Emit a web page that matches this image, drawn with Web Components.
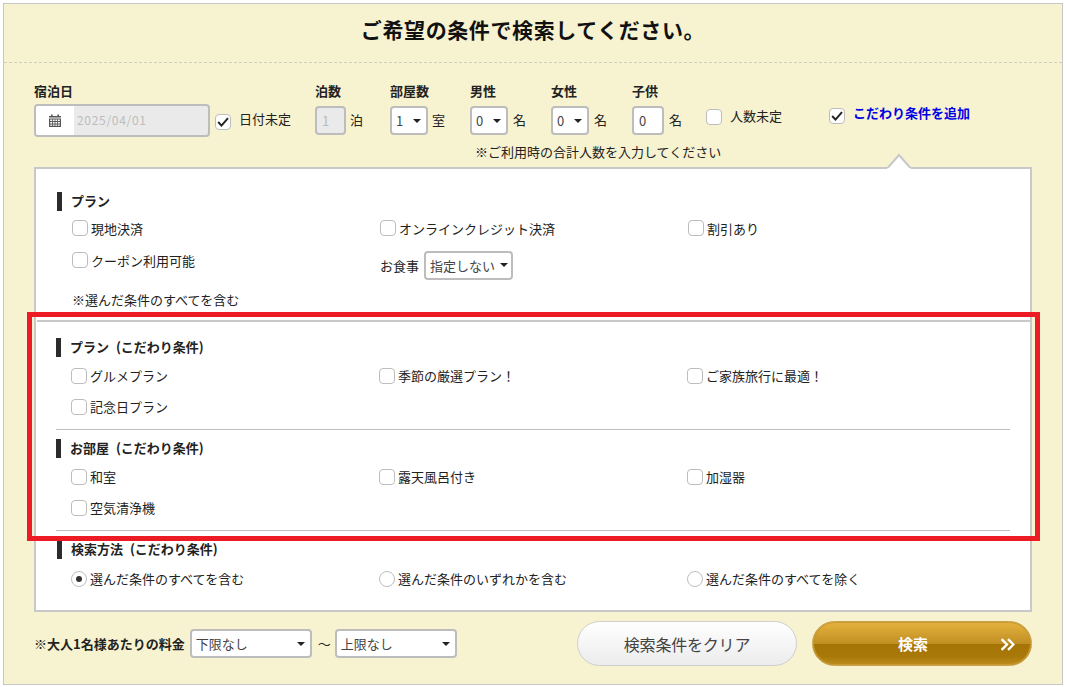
<!DOCTYPE html>
<html lang="ja">
<head>
<meta charset="utf-8">
<title>search</title>
<style>
html, body { margin: 0; padding: 0; background: #fff; }
body { font-family: "Noto Sans CJK JP", "Liberation Sans", sans-serif; font-size: 13px; color: #222; }
</style>
</head>
<body>
<search-form></search-form>
<script>
const FONT = `"Noto Sans CJK JP", "Liberation Sans", sans-serif`;

class AppCheck extends HTMLElement {
    connectedCallback() {
        const radio = this.hasAttribute("radio");
        const on = this.hasAttribute("checked");
        const mark = !on ? "" : radio
            ? `<span class="dot"></span>`
            : `<svg viewBox="0 0 16 16" width="16" height="16"><path d="M3.2 8 6.5 11.6 13 4.2" fill="none" stroke="#222" stroke-width="2"/></svg>`;
        this.attachShadow({ mode: "open" }).innerHTML = `
            <style>
                :host { display: inline-flex; align-items: center; gap: var(--check-gap, 3px); height: 18px; white-space: nowrap; }
                .box {
                    box-sizing: border-box; width: 16px; height: 16px; flex: none;
                    position: relative;
                    display: flex; align-items: center; justify-content: center;
                    background: #fff; border: 1px solid #bdbdbd; border-radius: ${radio ? "50%" : "4px"};
                }
                svg { position: absolute; left: -1px; top: -1px; }
                .dot { width: 6px; height: 6px; border-radius: 50%; background: #333; }
                .txt { position: relative; top: var(--text-shift, 0); }
            </style>
            <span class="box">${mark}</span><span class="txt"><slot></slot></span>`;
    }
}

class AppSelect extends HTMLElement {
    connectedCallback() {
        const w = this.getAttribute("width") || "38";
        const h = this.getAttribute("height") || "29";
        this.attachShadow({ mode: "open" }).innerHTML = `
            <style>
                :host {
                    display: inline-flex; align-items: center; justify-content: space-between;
                    box-sizing: border-box; width: ${w}px; height: ${h}px; padding: 0 var(--pad, 5px) 0 4px;
                    background: #fff; border: 2px solid #bdbdbd; border-radius: 4px; color: #444; white-space: nowrap;
                }
                i { width: 0; height: 0; border: 4px solid transparent; border-top: 4px solid #222; border-bottom: 0; flex: none; }
            </style>
            <span><slot></slot></span><i></i>`;
    }
}

class FieldGroup extends HTMLElement {
    connectedCallback() {
        const label = this.getAttribute("label");
        const unit = this.getAttribute("unit");
        this.attachShadow({ mode: "open" }).innerHTML = `
            <style>
                :host { display: block; margin-left: var(--left, 0); }
                b { display: block; height: 18px; line-height: 18px; font-size: 13px; margin-bottom: 5px; }
                .row { display: flex; align-items: center; height: 31px; gap: var(--unit-gap, 4px); }
                .row span { position: relative; top: -1px; }
            </style>
            <b>${label}</b>
            <div class="row"><slot></slot>${unit ? `<span>${unit}</span>` : ""}</div>`;
    }
}

class TextBox extends HTMLElement {
    connectedCallback() {
        const off = this.hasAttribute("disabled");
        this.attachShadow({ mode: "open" }).innerHTML = `
            <style>
                :host {
                    display: flex; align-items: center; box-sizing: border-box; width: ${this.getAttribute("width")}px; height: 29px;
                    padding-left: 5px; border: 2px solid #bdbdbd; border-radius: 4px;
                    background: ${off ? "#eaeaea" : "#fff"}; color: ${off ? "#bbb" : "#444"};
                }
            </style><slot></slot>`;
    }
}

class DateBox extends HTMLElement {
    connectedCallback() {
        this.attachShadow({ mode: "open" }).innerHTML = `
            <style>
                :host {
                    display: flex; box-sizing: border-box; width: 176px; height: 33px; overflow: hidden;
                    border: 2px solid #bdbdbd; border-radius: 4px; background: #eaeaea; color: #bdbdbd; font-size: 12px;
                }
                .ico { width: 38px; background: #fff; display: flex; align-items: center; justify-content: center; }
                .val { padding-left: 3px; line-height: 27px; letter-spacing: .7px; }
            </style>
            <span class="ico"><svg viewBox="0 0 12 13" width="12" height="13"><path fill="#555" d="M0 3.4V2h2V.5h1.6V2h4.8V.5H10V2h2v1.4zM0 4.4h12V13H0zM1.2 5.6v1.5h2V5.6zm2.8 0v1.5h1.6V5.6zm2.4 0v1.5H8V5.6zm2.4 0v1.5h2V5.6zM1.2 8v1.5h2V8zm2.8 0v1.5h1.6V8zm2.4 0v1.5H8V8zm2.4 0v1.5h2V8zM1.2 10.4v1.4h2v-1.4zm2.8 0v1.4h1.6v-1.4zm2.4 0v1.4H8v-1.4zm2.4 0v1.4h2v-1.4z"/></svg></span>
            <span class="val"><slot></slot></span>`;
    }
}

class CondSection extends HTMLElement {
    connectedCallback() {
        this.attachShadow({ mode: "open" }).innerHTML = `
            <style>
                :host { display: block; }
                h3 {
                    margin: 0 0 0 var(--bar-left, 21px); padding-left: 9px; height: 19px; line-height: 18px;
                    border-left: 5px solid #2b2b2b; font-size: 13px; font-weight: bold; word-spacing: 4px;
                }
                .grid {
                    display: grid; grid-template-columns: repeat(3, 308px); grid-auto-rows: var(--row, 31px);
                    align-items: center; padding-left: var(--grid-left, 36px); margin-top: var(--grid-top, 1px);
                    padding-bottom: var(--grid-bottom, 0);
                }
            </style>
            <h3>${this.getAttribute("heading")}</h3>
            <div class="grid"><slot></slot></div>`;
    }
}

class ActionButton extends HTMLElement {
    connectedCallback() {
        const primary = this.hasAttribute("primary");
        this.attachShadow({ mode: "open" }).innerHTML = `
            <style>
                :host {
                    display: flex; align-items: center; justify-content: center; position: relative;
                    box-sizing: border-box; width: 220px; height: 45px; border-radius: 23px; font-size: ${primary ? 15 : 16}px;
                    ${primary
                        ? `font-weight: bold; color: #fff; padding-right: 18px; border: 1px solid #c9a24a; box-shadow: inset 0 0 0 1px #c89a35;
                           background: linear-gradient(#e6b33f 0, #c08f22 50%, #a67405 51%, #a87808 80%, #bd8d20 100%);`
                        : `color: #444; letter-spacing: -.2px; border: 1px solid #cfcfcf;
                           background: linear-gradient(#fff, #ececec);`}
                }
                svg { position: absolute; right: 16px; top: 15px; }
            </style>
            <slot></slot>
            ${primary ? `<svg viewBox="0 0 14 14" width="15" height="15"><path d="M1.5 2 6.5 7 1.5 12M7.5 2 12.5 7 7.5 12" fill="none" stroke="#fff" stroke-width="2.2"/></svg>` : ""}`;
    }
}

class SearchForm extends HTMLElement {
    connectedCallback() {
        this.attachShadow({ mode: "open" }).innerHTML = `
            <style>
                :host { display: block; padding: 3px 4px 1px 3px; font-family: ${FONT}; font-size: 13px; color: #222; position: relative; }
                .frame { box-sizing: border-box; height: 682px; border: 1px solid #c6c6c6; background: #f7f2d0; padding: 0 30px; }
                h2 {
                    margin: 0 -30px; height: 58px; line-height: 51px; text-align: center; font-size: 21px; font-weight: bold; color: #111;
                    letter-spacing: .6px; border-bottom: 1px dashed #cfcfbd;
                }
                .fields { display: flex; align-items: flex-start; margin-top: 19px; height: 85px; position: relative; }
                .note { position: absolute; left: 441px; top: 61px; line-height: 18px; }
                .flag { padding-top: 31px; }
                .panel {
                    box-sizing: border-box; height: 445px; background: #fff; border: 2px solid #c8c8c8; position: relative;
                    padding-top: 23px;
                }
                .tip { position: absolute; right: 119px; top: -16px; }
                .meal { display: flex; align-items: center; gap: 5px; position: relative; top: 5px; }
                .picked { margin: 15px 0 0 36px; line-height: 18px; }
                .inner { margin: 11px 0 0 1px; border-top: 2px solid #c8c8c8; padding-top: 16px; --bar-left: 19px; --grid-left: 34px; --grid-top: 3px; --grid-bottom: 7px; }
                .rule { height: 1px; background: #bfbfbf; margin: 0 20px 0 19px; }
                .gap { margin-top: 9px; }
                .method { margin-top: 9px; --grid-top: 4px; --grid-left: 35px; }
                .foot { display: flex; align-items: center; margin-top: 9px; height: 45px; }
                .foot b { margin-right: 5px; }
                .tilde { margin: 0 4px 0 6px; }
                .btns { margin-left: auto; display: flex; gap: 15px; }
                .mark { position: absolute; box-sizing: border-box; left: 27px; top: 312px; width: 1013px; height: 229px; border: 5px solid #ed1c24; pointer-events: none; }
                a { color: #0000e6; font-weight: bold; text-decoration: none; }
            </style>
            <div class="frame">
                <h2>ご希望の条件で検索してください。</h2>
                <div class="fields">
                    <field-group label="宿泊日"><date-box>2025/04/01</date-box></field-group>
                    <div class="flag" style="margin-left:5px;--check-gap:8px;--text-shift:-4px"><app-check checked>日付未定</app-check></div>
                    <field-group label="泊数" unit="泊" style="--left:24px"><text-box width="31" disabled>1</text-box></field-group>
                    <field-group label="部屋数" unit="室" style="--left:27px"><app-select>1</app-select></field-group>
                    <field-group label="男性" unit="名" style="--left:25px;--unit-gap:5px"><app-select>0</app-select></field-group>
                    <field-group label="女性" unit="名" style="--left:25px;--unit-gap:5px"><app-select>0</app-select></field-group>
                    <field-group label="子供" unit="名" style="--left:25px;--unit-gap:5px"><text-box width="32">0</text-box></field-group>
                    <div class="flag" style="margin-left:24px;padding-top:26px;--check-gap:8px;--text-shift:-2px"><app-check>人数未定</app-check></div>
                    <div class="flag" style="margin-left:47px;padding-top:25px;--check-gap:8px;--text-shift:-4px"><app-check checked><a>こだわり条件を追加</a></app-check></div>
                    <div class="note">※ご利用時の合計人数を入力してください</div>
                </div>
                <div class="panel">
                    <svg class="tip" width="24" height="16" viewBox="0 0 24 16"><path d="M0 16 12 1.5 24 16" fill="#fff"/><path d="M1 14.5 12 2 23 14.5" fill="none" stroke="#c8c8c8" stroke-width="2"/></svg>
                    <cond-section heading="プラン" style="--row:32px">
                        <app-check>現地決済</app-check>
                        <app-check>オンラインクレジット決済</app-check>
                        <app-check>割引あり</app-check>
                        <app-check>クーポン利用可能</app-check>
                        <div class="meal"><span>お食事</span><app-select width="89" height="29" style="--pad:3px">指定しない</app-select></div>
                    </cond-section>
                    <div class="picked">※選んだ条件のすべてを含む</div>
                    <div class="inner">
                        <cond-section heading="プラン (こだわり条件)">
                            <app-check>グルメプラン</app-check>
                            <app-check>季節の厳選プラン！</app-check>
                            <app-check>ご家族旅行に最適！</app-check>
                            <app-check>記念日プラン</app-check>
                        </cond-section>
                        <div class="rule"></div>
                        <div class="gap"></div>
                        <cond-section heading="お部屋 (こだわり条件)">
                            <app-check>和室</app-check>
                            <app-check>露天風呂付き</app-check>
                            <app-check>加湿器</app-check>
                            <app-check>空気清浄機</app-check>
                        </cond-section>
                        <div class="rule"></div>
                    </div>
                    <div class="method">
                        <cond-section heading="検索方法 (こだわり条件)">
                            <app-check radio checked>選んだ条件のすべてを含む</app-check>
                            <app-check radio>選んだ条件のいずれかを含む</app-check>
                            <app-check radio>選んだ条件のすべてを除く</app-check>
                        </cond-section>
                    </div>
                </div>
                <div class="foot">
                    <b>※大人1名様あたりの料金</b>
                    <app-select width="122" height="29">下限なし</app-select>
                    <span class="tilde">～</span>
                    <app-select width="122" height="29">上限なし</app-select>
                    <div class="btns">
                        <action-button>検索条件をクリア</action-button>
                        <action-button primary>検索</action-button>
                    </div>
                </div>
            </div>
            <div class="mark"></div>`;
    }
}

customElements.define("app-check", AppCheck);
customElements.define("app-select", AppSelect);
customElements.define("field-group", FieldGroup);
customElements.define("text-box", TextBox);
customElements.define("date-box", DateBox);
customElements.define("cond-section", CondSection);
customElements.define("action-button", ActionButton);
customElements.define("search-form", SearchForm);
</script>
</body>
</html>
